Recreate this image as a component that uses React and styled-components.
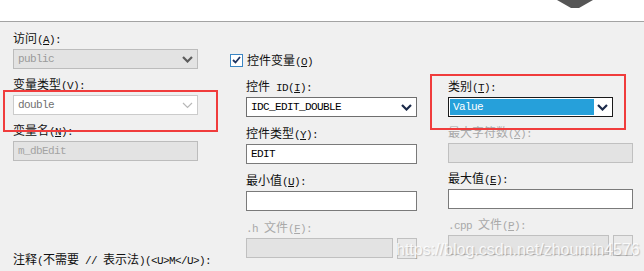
import React from "react";
import styled, { createGlobalStyle } from "styled-components";

const GlobalStyle = createGlobalStyle`
  html, body {
    margin: 0;
    padding: 0;
    background: #f0f0f0;
  }
  body {
    font-family: "Noto Sans CJK SC", "Liberation Sans", sans-serif;
  }
`;

const Panel = styled.div`
  position: relative;
  width: 644px;
  height: 271px;
  overflow: hidden;
  background: #f0f0f0;
`;

const TopBar = styled.div`
  height: 21px;
  background: #ffffff;
  border-bottom: 1px solid #a3a3a3;
  display: flex;
  justify-content: flex-end;
  padding-right: 51px;
`;

const Body = styled.div`
  box-sizing: border-box;
  height: 249px;
  display: grid;
  grid-template-columns: 185px 188px 185px;
  column-gap: 31px;
  padding: 9px 0 5px 13px;
`;

const Column = styled.div`
  display: flex;
  flex-direction: column;
  gap: ${(p) => p.$gap || 8}px;
  padding-top: ${(p) => p.$top || 0}px;
`;

const Field = styled.div`
  display: flex;
  flex-direction: column;
  gap: 4px;
`;

const Label = styled.div`
  font-size: 12px;
  line-height: 14px;
  height: 14px;
  white-space: nowrap;
  color: ${(p) => (p.$disabled ? "#a9a9a9" : "#111111")};
`;

const Mono = styled.span`
  font-family: "Liberation Mono", monospace;
  font-size: 11px;
  letter-spacing: -0.6px;
`;

const Key = styled.span`
  text-decoration: underline;
  text-underline-offset: 1px;
`;

const Box = styled.div`
  box-sizing: border-box;
  height: 20px;
  width: ${(p) => (p.$width ? `${p.$width}px` : "auto")};
  display: flex;
  align-items: center;
  padding: 0 4px;
  background: ${(p) => (p.$disabled ? "#e3e3e3" : "#ffffff")};
  border: 1px solid ${(p) => p.$border || "#7a7a7a"};
  color: ${(p) => p.$color || "#000000"};
  font-family: "Liberation Mono", monospace;
  font-size: 11px;
  letter-spacing: -0.6px;
`;

const ComboBox = styled(Box)`
  justify-content: space-between;
  padding-right: 4px;
`;

const Selected = styled.div`
  flex: 1;
  align-self: stretch;
  margin: 1px 3px 1px -3px;
  padding-left: 3px;
  background: #26a0da;
  color: #ffffff;
  display: flex;
  align-items: center;
`;

const FileRow = styled.div`
  display: flex;
  gap: 4px;
`;

const SmallButton = styled.div`
  box-sizing: border-box;
  width: 20px;
  height: 21px;
  background: #e9e9e9;
  border: 1px solid #c0c0c0;
`;

const CheckRow = styled.div`
  display: flex;
  align-items: center;
  gap: 4px;
  height: 16px;
  margin-left: 1px;
  margin-bottom: 3px;
`;

const CheckBox = styled.div`
  box-sizing: border-box;
  width: 13px;
  height: 13px;
  background: #ffffff;
  border: 1px solid #3b86c4;
  display: flex;
  align-items: center;
  justify-content: center;
`;

const Indented = styled.div`
  display: flex;
  flex-direction: column;
  gap: 9px;
  padding-left: 17px;
`;

const Comment = styled(Label)`
  margin-top: auto;
`;

const Annotation = styled.div`
  position: absolute;
  box-sizing: border-box;
  border: 2px solid #f03c3c;
  pointer-events: none;
`;

const Watermark = styled.div`
  position: absolute;
  left: 396px;
  top: 241px;
  font-family: "Liberation Sans", sans-serif;
  font-size: 16px;
  line-height: 18px;
  color: rgba(255, 255, 255, 0.85);
  text-shadow: 1px 1px 1px rgba(0, 0, 0, 0.2);
  white-space: nowrap;
`;

// split into CJK and latin runs, latin goes in the mono face
const runs = (text) =>
  text
    .split(/([\u3000-\u9fff]+)/)
    .filter(Boolean)
    .map((part, i) =>
      /[\u3000-\u9fff]/.test(part) ? (
        <span key={i}>{part}</span>
      ) : (
        <Mono key={i}>{part}</Mono>
      )
    );

const Caption = ({ text, hot, colon = true, disabled }) => (
  <Label $disabled={disabled}>
    {runs(text)}
    <Mono>
      (<Key>{hot}</Key>){colon ? ":" : ""}
    </Mono>
  </Label>
);

const Chevron = ({ color = "#1b2a4a", width = 2.2 }) => (
  <svg width="11" height="7" viewBox="0 0 11 7">
    <polyline
      points="1,1 5.5,5.5 10,1"
      fill="none"
      stroke={color}
      strokeWidth={width}
    />
  </svg>
);

const Check = () => (
  <svg width="9" height="8" viewBox="0 0 9 8">
    <polyline
      points="1,4 3.5,6.5 8,1"
      fill="none"
      stroke="#1f3360"
      strokeWidth="1.8"
    />
  </svg>
);

export default function App() {
  return (
    <Panel>
      <GlobalStyle />
      <TopBar>
        <svg width="36" height="8" viewBox="0 0 36 8">
          <polygon points="0,0 36,0 22,8 14,8" fill="#555555" />
        </svg>
      </TopBar>
      <Body>
        <Column $gap={8}>
          <Field>
            <Caption text="访问" hot="A" />
            <ComboBox $disabled $border="#bcbcbc" $color="#9a9a9a">
              public
              <Chevron color="#5c5c5c" />
            </ComboBox>
          </Field>
          <Field>
            <Caption text="变量类型" hot="V" />
            <ComboBox $border="#cbcbcb" $color="#6f6f6f">
              double
              <Chevron color="#b8b8b8" width={1.2} />
            </ComboBox>
          </Field>
          <Field>
            <Caption text="变量名" hot="N" />
            <Box $disabled $border="#bcbcbc" $color="#a3a3a3">
              m_dbEdit
            </Box>
          </Field>
          <Comment>
            {runs("注释(不需要 // 表示法)")}
            <Mono>(&lt;U&gt;M&lt;/U&gt;):</Mono>
          </Comment>
        </Column>

        <Column $gap={0} $top={21}>
          <CheckRow>
            <CheckBox>
              <Check />
            </CheckBox>
            <Caption text="控件变量" hot="O" colon={false} />
          </CheckRow>
          <Indented>
            <Field>
              <Caption text="控件 ID" hot="I" />
              <ComboBox $border="#6e6e6e">
                IDC_EDIT_DOUBLE
                <Chevron />
              </ComboBox>
            </Field>
            <Field>
              <Caption text="控件类型" hot="Y" />
              <Box $border="#7a7a7a">EDIT</Box>
            </Field>
            <Field>
              <Caption text="最小值" hot="U" />
              <Box $border="#7a7a7a" />
            </Field>
            <Field>
              <Caption text=".h 文件" hot="F" disabled />
              <FileRow>
                <Box $disabled $border="#c0c0c0" style={{ flex: 1 }} />
                <SmallButton />
              </FileRow>
            </Field>
          </Indented>
        </Column>

        <Column $gap={8} $top={48}>
          <Field>
            <Caption text="类别" hot="T" />
            <ComboBox $border="#1a1a1a" $width={165}>
              <Selected>Value</Selected>
              <Chevron />
            </ComboBox>
          </Field>
          <Field>
            <Caption text="最大字符数" hot="X" disabled />
            <Box $disabled $border="#c0c0c0" />
          </Field>
          <Field>
            <Caption text="最大值" hot="E" />
            <Box $border="#7a7a7a" />
          </Field>
          <Field>
            <Caption text=".cpp 文件" hot="P" disabled />
            <FileRow>
              <Box $disabled $border="#c0c0c0" style={{ flex: 1 }} />
              <SmallButton />
            </FileRow>
          </Field>
        </Column>
      </Body>

      <Annotation style={{ left: 3, top: 90, width: 215, height: 42 }} />
      <Annotation style={{ left: 430, top: 74, width: 196, height: 56 }} />
      <Watermark>https://blog.csdn.net/zhoumin4576</Watermark>
    </Panel>
  );
}
